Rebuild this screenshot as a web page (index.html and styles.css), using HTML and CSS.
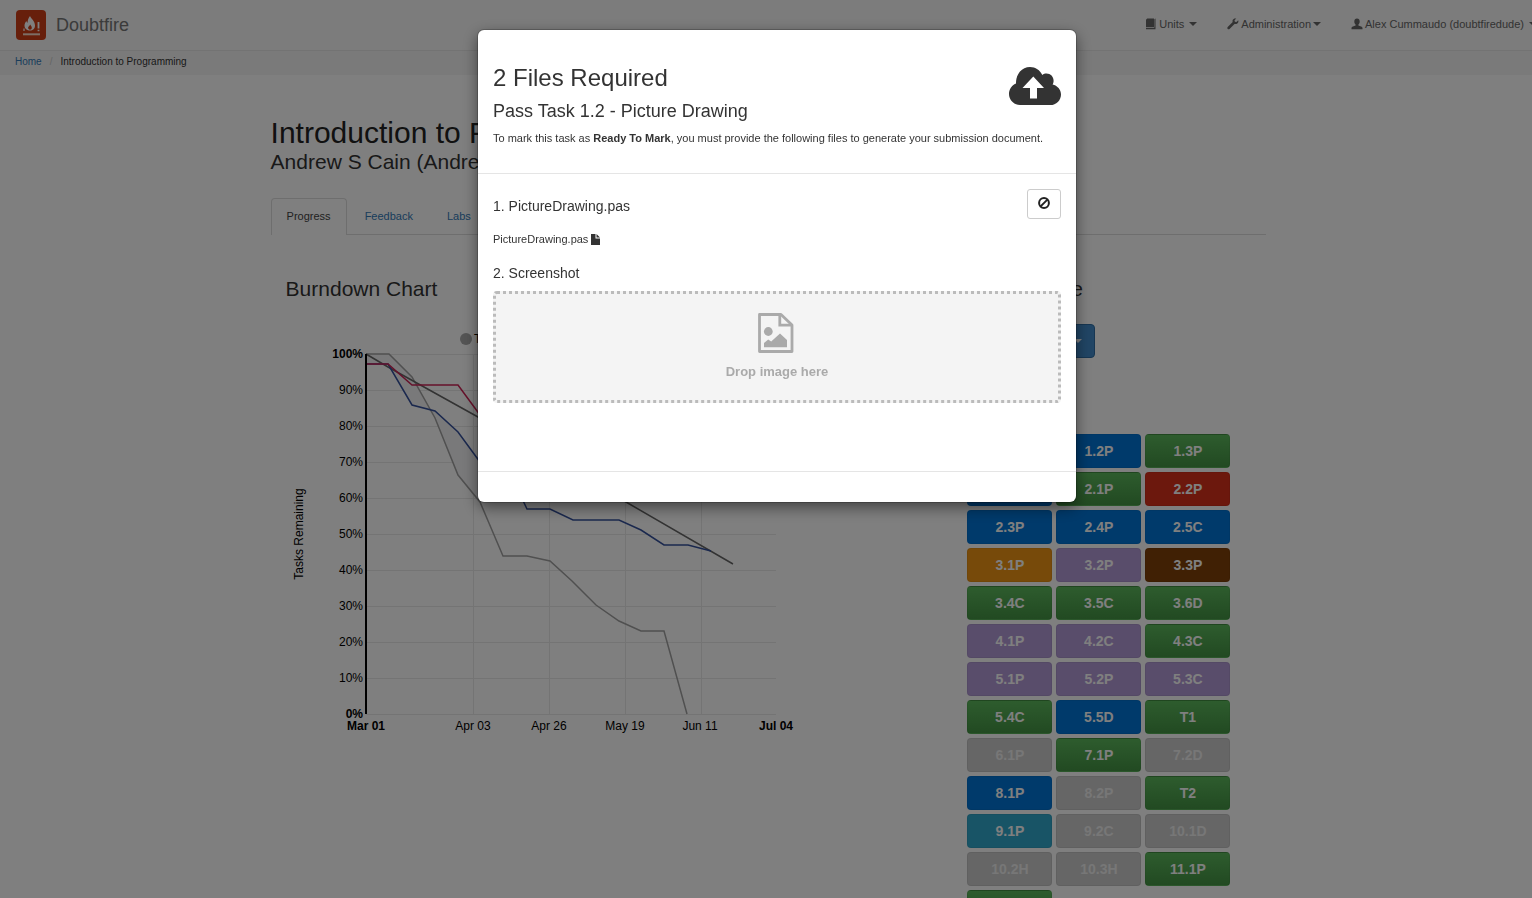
FILE: index.html
```html
<!DOCTYPE html>
<html lang="en">
<head>
<meta charset="utf-8">
<title>Doubtfire</title>
<link rel="stylesheet" href="styles.css">
</head>
<body class="modal-open">
<header class="navbar">
  <a class="brand" href="#">
    <svg class="brand-logo" viewBox="0 0 30 30" aria-hidden="true">
      <rect width="30" height="30" rx="4" fill="#cf3e17"/>
      <path d="M14 6c1 2.500 5 5 5 9.500 0 3.200-2.200 5-5 5s-5.500-1.800-5.500-5c0-1.800 1-3.200 1.800-4.500.3 1 .8 1.500 1.300 1.800C11.500 10.500 12.500 8 14 6z" fill="#fff"/>
      <path d="M14.200 14.500c.5 1.200 1.600 1.800 1.600 3.200 0 1.200-.7 2-1.800 2s-1.900-.8-1.900-1.900c0-1.200 1.500-1.800 2.100-3.300z" fill="#cf3e17"/>
      <path d="M8 18.500v2.500" stroke="#fff" stroke-width="1.200"/>
      <path d="M22.500 12v6.500M22.500 19.700v1.600" stroke="#fff" stroke-width="1.800"/>
      <path d="M7 23.300h17v2H7z" fill="#f8dccb"/>
    </svg>
    <span>Doubtfire</span>
  </a>
  <nav class="menu">
    <a href="#"><svg class="ico" viewBox="0 0 12 12"><path d="M2.200.5H9V9H1V1.700zM1 9.800h8.400V1.200l1.100-.6v10.600H1z" fill="currentColor"/></svg><span>Units</span><i class="caret wide"></i></a>
    <a href="#"><svg class="ico" viewBox="0 0 12 12"><path d="M11.200 2.300 9.400 4.100 7.900 3.800l-.4-1.500L9.300.6C7.900.1 6.300.6 5.700 2c-.3.700-.3 1.400 0 2.100L.7 9.100c-.5.500-.5 1.300 0 1.800s1.300.5 1.800 0l5-5c.8.300 1.700.3 2.500-.2 1.300-.7 1.700-2.200 1.200-3.400z" fill="currentColor"/></svg><span>Administration</span><i class="caret"></i></a>
    <a href="#"><svg class="ico" viewBox="0 0 12 12"><path d="M6 .5c1.700 0 2.700 1.200 2.700 2.900 0 1.300-.5 2.500-1.300 3.200v1c1.600.6 4.100 1.100 4.100 2.500v1.100H.5v-1.100c0-1.400 2.500-1.900 4.100-2.500v-1C3.800 5.900 3.300 4.700 3.300 3.400 3.300 1.700 4.300.5 6 .5z" fill="currentColor"/></svg><span>Alex Cummaudo (doubtfiredude)</span><i class="caret wide"></i></a>
  </nav>
</header>
<nav class="breadcrumb" aria-label="Breadcrumb"><a href="#">Home</a><span class="sep">/</span><span>Introduction to Programming</span></nav>

<main class="page">
  <h1>Introduction to Programming</h1>
  <p class="tutor">Andrew S Cain (Andrew Cain)</p>
  <nav class="tabs">
    <a class="active" href="#">Progress</a><a href="#">Feedback</a><a href="#">Labs</a>
  </nav>
  <div class="columns">
    <section class="chart">
      <h3>Burndown Chart</h3>
      <svg class="plot" viewBox="286 325 520 415" role="img" aria-label="Burndown chart of tasks remaining">
        <circle cx="466" cy="339" r="6" fill="#aaa"/>
        <text x="474" y="343">Target</text>
        <path class="gridline" d="M366 354.500H776M366 390.500H776M366 426.500H776M366 462.500H776M366 498.500H776M366 534.500H776M366 570.500H776M366 606.500H776M366 642.500H776M366 678.500H776M366 714.500H776M473.500 354V714M549.500 354V714M625.500 354V714M701.500 354V714"/>
        <path class="area" d="M366 354H389L412 377 435 418 458 475 478 501V459L458 432 435 411 412 405 388 364H366z"/>
        <polyline class="line light" points="366,354 389,354 412,377 435,418 458,475 480,502 503,556 527,556 550,561 572,581 596,605 619,621 641,631 664,631 687,714"/>
        <polyline class="line dark" points="366,354 388,367 478,417 626,502 733,564"/>
        <polyline class="line blue" points="366,364 388,364 412,405 435,411 458,432 480,462 504,470 518,490 527,509 550,509 573,520 619,520 641,530 664,545 688,545 711,551"/>
        <polyline class="line red" points="366,364 388,364 412,385 458,385 480,415"/>
        <path d="M366 354V714" stroke="#000" stroke-width="2"/>
        <g text-anchor="end">
          <text class="strong" x="363" y="358">100%</text>
          <text x="363" y="394">90%</text><text x="363" y="430">80%</text><text x="363" y="466">70%</text>
          <text x="363" y="502">60%</text><text x="363" y="538">50%</text><text x="363" y="574">40%</text>
          <text x="363" y="610">30%</text><text x="363" y="646">20%</text><text x="363" y="682">10%</text>
          <text class="strong" x="363" y="718">0%</text>
        </g>
        <g text-anchor="middle">
          <text class="strong" x="366" y="730">Mar 01</text>
          <text x="473" y="730">Apr 03</text><text x="549" y="730">Apr 26</text>
          <text x="625" y="730">May 19</text><text x="700" y="730">Jun 11</text>
          <text class="strong" x="776" y="730">Jul 04</text>
          <text transform="translate(303 534) rotate(-90)">Tasks Remaining</text>
        </g>
      </svg>
    </section>
    <section class="tasks">
      <h3>Task Outline</h3>
      <button class="grade" type="button">Distinction<i class="caret"></i></button>
      <div class="task-grid">
        <button class="t blue">1.1P</button><button class="t blue">1.2P</button><button class="t green">1.3P</button>
        <button class="t blue">1.4P</button><button class="t green">2.1P</button><button class="t red">2.2P</button>
        <button class="t blue">2.3P</button><button class="t blue">2.4P</button><button class="t blue">2.5C</button>
        <button class="t orange">3.1P</button><button class="t purple">3.2P</button><button class="t brown">3.3P</button>
        <button class="t green">3.4C</button><button class="t green">3.5C</button><button class="t green">3.6D</button>
        <button class="t purple">4.1P</button><button class="t purple">4.2C</button><button class="t green">4.3C</button>
        <button class="t purple">5.1P</button><button class="t purple">5.2P</button><button class="t purple">5.3C</button>
        <button class="t green">5.4C</button><button class="t blue">5.5D</button><button class="t green">T1</button>
        <button class="t grey">6.1P</button><button class="t green">7.1P</button><button class="t grey">7.2D</button>
        <button class="t blue">8.1P</button><button class="t grey">8.2P</button><button class="t green">T2</button>
        <button class="t teal">9.1P</button><button class="t grey">9.2C</button><button class="t grey">10.1D</button>
        <button class="t grey">10.2H</button><button class="t grey">10.3H</button><button class="t green">11.1P</button>
        <button class="t green" aria-label="Next task"></button>
      </div>
    </section>
  </div>
</main>

<div class="backdrop">
  <div class="dialog" role="dialog" aria-modal="true" aria-labelledby="dialog-title">
    <div class="dialog-header">
      <div>
        <h2 id="dialog-title">2 Files Required</h2>
        <h4>Pass Task 1.2 - Picture Drawing</h4>
        <p>To mark this task as <strong>Ready To Mark</strong>, you must provide the following files to generate your submission document.</p>
      </div>
      <svg class="cloud" viewBox="0 0 52 38" aria-hidden="true"><path fill="#333" fill-rule="evenodd" d="M11 38C5 38 0 33 0 27c0-4.500 2.500-8.500 7-10.500-.2-9 5.500-16.500 14-16.500 5.500 0 10 3 12.300 8 1.300-1 2.700-1.400 4.200-1.400 4.500 0 7.700 3.900 7 8.400-.1.900-.5 1.700-.9 2.400C48.400 18.500 52 22.600 52 27.400 52 33.200 47.200 38 41.300 38zM24.300 9.500 13.500 21H21v10.500h7V21h7z"/></svg>
    </div>
    <div class="dialog-body">
      <div class="file-row">
        <h5>1. PictureDrawing.pas</h5>
        <button class="clear" type="button" aria-label="Remove file"><svg viewBox="0 0 12 12"><circle cx="6" cy="6" r="4.900"/><path d="M2.600 9.400 9.400 2.600"/></svg></button>
      </div>
      <p class="file-name">PictureDrawing.pas <svg viewBox="0 0 9 11" aria-hidden="true"><path d="M0 0h4.500v4.500H9V11H0zM5.500 0 9 3.500H5.500z" fill="#333"/></svg></p>
      <h5>2. Screenshot</h5>
      <button class="drop" type="button">
        <svg viewBox="0 0 38 40" aria-hidden="true"><path d="M1.500 1.500H23L34 12V38.500H1.500z" fill="none" stroke="#aaa" stroke-width="2.800" stroke-linejoin="round"/><path d="M21.800 1.500V12.200H34" fill="none" stroke="#aaa" stroke-width="2.800"/><circle cx="10.300" cy="18.500" r="4.400" fill="#aaa"/><path d="M6 34.300V30l4.200-3.500 3 2L22 20.500l7 6.500v7.300z" fill="#aaa"/></svg>
        <span>Drop image here</span>
      </button>
    </div>
    <div class="dialog-footer"></div>
  </div>
</div>
</body>
</html>
```
FILE: styles.css
```css
* { box-sizing: border-box; }
body { margin: 0; font: 11px/16px "Liberation Sans", Arial, sans-serif; color: #333; background: #fff; }
.modal-open { overflow: hidden; }
h1, h2, h3, h4, h5, p { margin: 0; font-weight: 400; }
a { color: #337ab7; text-decoration: none; }
button { font-family: inherit; }

.navbar { display: flex; justify-content: space-between; align-items: center; height: 51px; padding-left: 16px; background: #f8f8f8; border: solid #e7e7e7; border-width: 0 0 1px; }
.brand { display: flex; align-items: center; gap: 10px; font-size: 18px; line-height: 20px; color: #777; }
.brand-logo { width: 30px; height: 30px; }
.menu { display: flex; gap: 30px; margin-right: -5px; padding-bottom: 2px; }
.menu a { display: flex; align-items: center; color: #666; white-space: nowrap; }
.ico { width: 12px; height: 12px; margin-right: 2px; }
.caret { border: 4px solid transparent; border-top-color: currentColor; border-bottom: 0; margin-left: 2px; }
.caret.wide { margin-left: 5px; }
.breadcrumb { padding: 3px 15px 5px; background: #f5f5f5; font-size: 10px; }
.sep { padding: 0 8px; color: #ccc; }

.page { box-sizing: content-box; width: 65%; margin: 0 auto; padding: 41px 0 20px 5px; }
h1 { font-size: 30px; line-height: 33px; color: #222; }
.tutor { font-size: 21px; line-height: 26px; }
.tabs { display: flex; margin-top: 23px; border-bottom: 1px solid #ddd; }
.tabs a { height: 36px; margin-right: 2px; padding: 9px 15px; border: 1px solid transparent; border-bottom: 0; }
.tabs .active { height: 37px; margin-bottom: -1px; color: #444; background: #fff; border-color: #ddd; border-radius: 4px 4px 0 0; }
.columns { display: flex; }
.chart { flex: 1; padding: 42px 15px 0; }
h3 { font-size: 21px; line-height: 24px; }
.plot { display: block; width: 520px; max-width: 100%; margin-top: 24px; font-size: 12px; }
.strong { font-weight: 700; }
.gridline { fill: none; stroke: #e8e8e8; }
.area { fill: #f2f2f4; }
.line { fill: none; stroke-width: 1.5; }
.light { stroke: #a0a0a0; }
.dark { stroke: #666; }
.blue.line { stroke: #35519c; }
.red.line { stroke: #cc2255; }

.tasks { width: 314px; padding: 42px 15px 0; }
.grade { display: flex; justify-content: space-between; align-items: center; width: 128px; height: 34px; margin-top: 23px; padding: 0 12px; border: 1px solid #2e6da4; border-radius: 4px; background: #428bca; color: #fff; font-size: 14px; }
.task-grid { display: grid; grid-template-columns: repeat(3, 85px); gap: 4px; margin-top: 76px; }
.t { height: 34px; padding: 0; border: 1px solid rgba(0, 0, 0, .05); border-radius: 4px; color: #fff; font-size: 14px; font-weight: 700; }
.t.blue { background: #0074d6; }
.t.green { background: linear-gradient(#5cb85c, #449444); }
.t.red { background: #d9301a; }
.t.orange { background: #ee9414; }
.t.purple { background: #b39ad6; }
.t.brown { background: #804008; }
.t.teal { background: #31a8cc; }
.t.grey { background: #ccc; color: #eee; }

.backdrop { position: fixed; inset: 0; display: flex; justify-content: center; align-items: flex-start; padding: 30px 0 30px 22px; overflow: auto; background: rgba(0, 0, 0, .5); }
.dialog { width: 598px; background: #fff; border-radius: 6px; box-shadow: 0 5px 15px rgba(0, 0, 0, .5), 0 0 0 1px rgba(0, 0, 0, .2); }
.dialog-header { display: flex; justify-content: space-between; padding: 34px 15px 27px; border-bottom: 1px solid #e5e5e5; }
.dialog-header > div { flex: 1; }
h2 { font-size: 24px; line-height: 28px; }
h4 { margin: 8px 0; font-size: 18px; line-height: 22px; }
.dialog-header p { white-space: nowrap; }
.cloud { flex: none; width: 52px; height: 38px; margin: 3px 0 0 -52px; }
.dialog-body { padding: 15px 15px 68px; }
.file-row { display: flex; justify-content: space-between; align-items: flex-start; }
h5 { padding: 9px 0; font-size: 14px; line-height: 16px; }
.clear { width: 34px; height: 30px; padding: 0 0 3px; border: 1px solid #ccc; border-radius: 3px; background: #fff; }
.clear svg { width: 12px; height: 12px; vertical-align: middle; fill: none; stroke: #222; stroke-width: 2; }
.file-name { padding: 8px 0 9px; }
.file-name svg { width: 9px; height: 11px; vertical-align: text-bottom; }
.drop { display: flex; flex-direction: column; align-items: center; gap: 10px; width: 100%; margin-top: 1px; padding: 19px 0; border: 3px dotted #bbb; border-radius: 4px; background: #f4f4f4; color: #aaa; font-size: 13px; font-weight: 700; line-height: 18px; }
.drop svg { width: 38px; height: 40px; }
.dialog-footer { height: 31px; border-top: 1px solid #e5e5e5; }
```
